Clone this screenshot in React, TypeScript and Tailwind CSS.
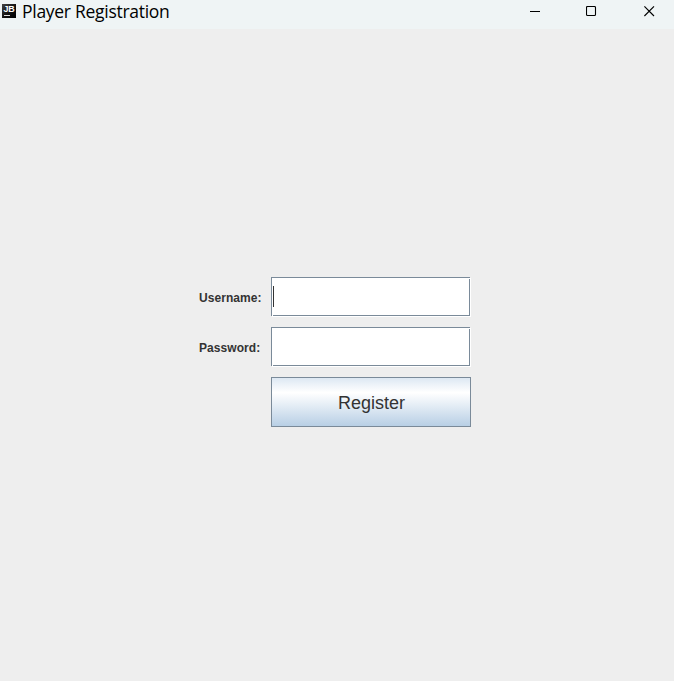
import React from "react";

function TitleBar() {
  return (
    <header className="flex h-[29px] items-start bg-[#eff4f5] text-black">
      <svg className="ml-[2px] mt-[4px] h-[14px] w-[14px] shrink-0" viewBox="0 0 14 14">
        <defs>
          <linearGradient id="badge" x1="0" y1="0" x2="1" y2="1">
            <stop offset="0" stopColor="#444" />
            <stop offset="0.55" stopColor="#111" />
            <stop offset="1" stopColor="#000" />
          </linearGradient>
        </defs>
        <rect width="14" height="14" fill="url(#badge)" />
        <text x="1.4" y="8" fontFamily="Liberation Sans, sans-serif" fontWeight="700" fontSize="9" textLength="11.4" lengthAdjust="spacingAndGlyphs" fill="#fff">JB</text>
        <rect x="2" y="11" width="6" height="1" fill="#ddd" />
      </svg>
      <h1 className="ml-[6px] whitespace-nowrap font-['Open_Sans',sans-serif] text-[17.5px] leading-[22px] tracking-[-0.28px]">
        Player Registration
      </h1>
      <div className="ml-auto mr-[19px] mt-[6px] flex gap-[46px]">
        <svg className="h-[11px] w-[11px]" viewBox="0 0 11 11"><path d="M1 5.5H11" stroke="#000" /></svg>
        <svg className="h-[11px] w-[11px]" viewBox="0 0 11 11"><rect x="0.5" y="0.5" width="9" height="9" rx="1" fill="none" stroke="#000" strokeWidth="1.1" /></svg>
        <svg className="ml-[1px] h-[11px] w-[11px]" viewBox="0 0 11 11"><path d="M0.4 0.4L10 10M10 0.4L0.4 10" stroke="#000" strokeWidth="1.15" fill="none" /></svg>
      </div>
    </header>
  );
}

function Field({ label, focused = false }: { label: string; focused?: boolean }) {
  return (
    <div className="flex h-10 items-center">
      <label className="w-[72px] whitespace-nowrap pt-[2px] font-['Liberation_Sans',sans-serif] text-[12px] font-bold leading-4 tracking-[0.07px] text-[#333]">
        {label}
      </label>
      <div className="relative h-10 w-[200px]">
        <div className="h-[39px] w-[199px] border border-[#7a8a99] bg-white" />
        <div className="absolute left-px top-px h-[39px] w-[199px] border border-white" />
        <div className="absolute bottom-[1px] left-[2px] right-[1px] top-[2px] border-b border-r border-[#7a8a99]" />
        {focused && <div className="absolute left-[2px] top-[9px] h-[21px] w-px bg-[#333]" />}
      </div>
    </div>
  );
}

export default function App() {
  return (
    <div className="flex h-[681px] w-[674px] flex-col overflow-hidden bg-[#eeeeee]">
      <TitleBar />
      <main className="ml-[199px] mt-[248px] flex w-[272px] flex-col gap-[10px]">
        <Field label="Username:" focused />
        <Field label="Password:" />
        <button className="ml-[72px] h-[50px] w-[200px] border border-[#7a8a99] bg-[linear-gradient(to_bottom,#dde8f3_0%,#ffffff_30%,#ffffff_31%,#b8cfe5_100%)] pl-[1px] pt-[2px] font-['Liberation_Sans',sans-serif] text-[18px] leading-6 text-[#333]">
          Register
        </button>
      </main>
    </div>
  );
}
